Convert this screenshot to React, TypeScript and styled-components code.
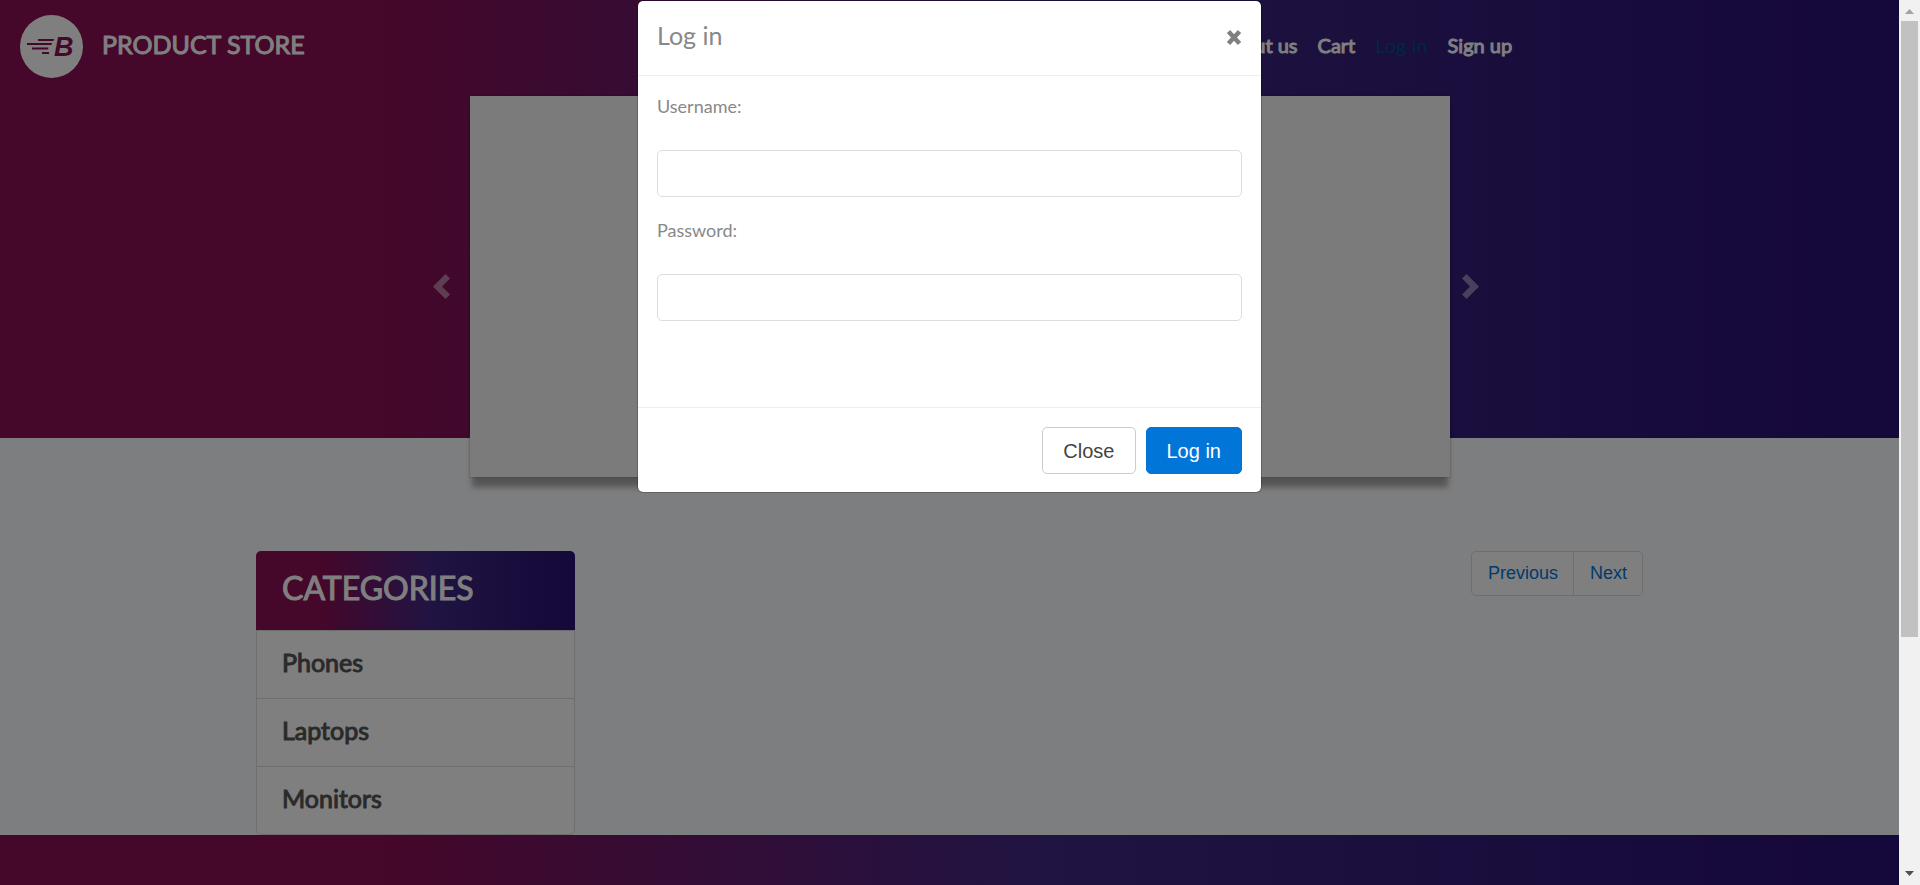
import React from 'react';
import styled, { createGlobalStyle } from 'styled-components';

const brandGradient = 'linear-gradient(to right, #8a0e54 0%, #8a0e54 20%, #402886 55%, #36207c 70%, #2a1074 100%)';
const lato = 'Lato, "Open Sans", sans-serif';
const arial = '"Liberation Sans", Arial, sans-serif';

const GlobalStyle = createGlobalStyle`
  *, *::before, *::after { box-sizing: border-box; }
  body { margin: 0; font-family: ${lato}; color: #888; background: #fbfcfe; }
  a { text-decoration: none; }
  h4, p, ul { margin: 0; padding: 0; }
`;

const Shell = styled.div`
  position: relative;
  display: flex;
  height: 100vh;
  overflow: hidden;
`;

const Page = styled.div`
  position: relative;
  flex: 1;
  min-width: 0;
  overflow: hidden;
`;

const Hero = styled.header`
  height: 438px;
  background: ${brandGradient};
`;

const NavBar = styled.nav`
  display: flex;
  align-items: center;
  height: 96px;
  padding: 0 20% 3px 20px;
`;

const Brand = styled.a`
  display: flex;
  align-items: center;
  gap: 19px;
  color: #fff;
  font-size: 25px;
  line-height: 32px;
  -webkit-text-stroke: 1px currentColor;

  span { padding-bottom: 6px; }
`;

const NavList = styled.ul`
  display: flex;
  gap: 6px;
  margin-left: auto;
  padding-bottom: 4px;
  list-style: none;
`;

const NavLink = styled.a<{ $active?: boolean }>`
  padding: 0 7px;
  font-size: 20px;
  line-height: 30px;
  white-space: nowrap;
  color: ${(p) => (p.$active ? '#014c8c' : '#fff')};
  -webkit-text-stroke: ${(p) => (p.$active ? '0' : '1px currentColor')};
`;

const Carousel = styled.section`
  display: flex;
  justify-content: center;
  align-items: center;
  gap: 12px;
  padding-left: 13px;
`;

const Slide = styled.div`
  width: 980px;
  height: 381px;
  margin-left: 8px;
  background: #f7f7f7;
  box-shadow: 0 12px 6px -2px rgba(0, 0, 0, 0.33), 0 0 2px rgba(0, 0, 0, 0.3);
`;

const Arrow = styled.button`
  display: flex;
  padding: 0;
  border: 0;
  background: none;
  color: #fff;
  opacity: 0.45;
`;

const Content = styled.main`
  display: flex;
  justify-content: space-between;
  align-items: flex-start;
  width: 75%;
  max-width: 1387px;
  margin: 0 auto;
  padding-top: 113px;
`;

const Categories = styled.div`
  display: flex;
  flex-direction: column;
  width: 23%;
`;

const CategoryTitle = styled.a`
  padding: 17px 26px 22px;
  border-radius: 5px 5px 0 0;
  background: ${brandGradient};
  color: #fff;
  font-size: 32px;
  line-height: 40px;
  -webkit-text-stroke: 1px currentColor;
`;

const Category = styled.a`
  padding: 15px 25px 20px;
  border: 1px solid #ddd;
  border-bottom-width: 0;
  background: #fff;
  color: #555;
  font-size: 25px;
  line-height: 32px;
  -webkit-text-stroke: 1px currentColor;

  &:last-child {
    border-bottom-width: 1px;
    border-radius: 0 0 5px 5px;
  }
`;

const Pager = styled.div`
  display: flex;
`;

const PageButton = styled.button`
  height: 45px;
  padding: 0 15px 2px 16px;
  border: 1px solid #ddd;
  background: #fff;
  color: #0275d8;
  font: 18px/24px ${arial};

  &:first-child { border-radius: 5px 0 0 5px; }
  &:last-child { border-left: 0; border-radius: 0 5px 5px 0; }
`;

const Footer = styled.footer`
  height: 50px;
  background: ${brandGradient};
`;

const Backdrop = styled.div`
  position: absolute;
  inset: 0;
  display: flex;
  justify-content: center;
  align-items: flex-start;
  background: rgba(0, 0, 0, 0.5);
`;

const Dialog = styled.form`
  width: 625px;
  border: 1px solid rgba(0, 0, 0, 0.2);
  border-radius: 6px;
  background: #fff;
  background-clip: padding-box;
`;

const DialogHeader = styled.div`
  display: flex;
  justify-content: space-between;
  align-items: flex-start;
  height: 75px;
  padding: 16px 19px;
  border-bottom: 1px solid #eceeef;

  h4 { font-size: 25px; font-weight: 400; line-height: 36px; color: #888; }
`;

const CloseIcon = styled.button`
  display: flex;
  padding: 12px 0;
  border: 0;
  background: none;
  color: #808080;
`;

const DialogBody = styled.div`
  display: flex;
  flex-direction: column;
  height: 331px;
  padding: 18px 19px;
`;

const Field = styled.div`
  display: flex;
  flex-direction: column;
  gap: 31px;
  margin-bottom: 21px;

  label { font-size: 18px; line-height: 25px; }
`;

const TextInput = styled.input`
  height: 47px;
  padding: 0 15px;
  border: 1px solid #ddd;
  border-radius: 5px;
  font: 20px/24px ${arial};
`;

const DialogFooter = styled.div`
  display: flex;
  justify-content: flex-end;
  gap: 10px;
  padding: 19px 19px 18px;
  border-top: 1px solid #eceeef;
`;

const Button = styled.button<{ $primary?: boolean }>`
  height: 47px;
  padding: 0 20px;
  border: 1px solid ${(p) => (p.$primary ? '#0275d8' : '#ccc')};
  border-radius: 5px;
  background: ${(p) => (p.$primary ? '#0275d8' : '#fff')};
  color: ${(p) => (p.$primary ? '#fff' : '#444')};
  font: 20px/28px ${arial};
`;

const ScrollTrack = styled.div`
  display: flex;
  flex-direction: column;
  align-items: center;
  width: 21px;
  padding: 9px 0;
  background: #f1f1f1;

  svg:last-child { margin-top: auto; }
`;

const ScrollThumb = styled.div`
  width: 17px;
  height: 71%;
  margin-top: 7px;
  background: #c1c1c1;
`;

const Logo = () => (
  <svg width="63" height="63" viewBox="0 0 63 63" aria-hidden="true">
    <circle cx="31.5" cy="31.5" r="31.5" fill="#fff" />
    <g fill="#8a0e54" stroke="none">
      <path d="M18 24H34L33.5 26H18zM7 28H32L31.5 30H7zM12 32.500H28.500L28 34.500H12zM22 37H29V39H22z" />
      <text x="34" y="41" fontFamily="Liberation Sans" fontSize="27" fontWeight="700" fontStyle="italic">B</text>
    </g>
  </svg>
);

const Chevron = ({ flip }: { flip?: boolean }) => (
  <svg width="17" height="25" viewBox="0 0 17 25" aria-hidden="true">
    <path
      d={flip ? 'M4.500 0L17 12.500L4.500 25L0 20.500L8 12.500L0 4.500z' : 'M12.500 0L0 12.500L12.500 25L17 20.500L9 12.500L17 4.500z'}
      fill="currentColor"
    />
  </svg>
);

export default function App() {
  return (
    <>
      <GlobalStyle />
      <Shell>
        <Page>
          <Hero>
            <NavBar>
              <Brand href="#home">
                <Logo />
                <span>PRODUCT STORE</span>
              </Brand>
              <NavList>
                <li><NavLink href="#about">About us</NavLink></li>
                <li><NavLink href="#cart">Cart</NavLink></li>
                <li><NavLink href="#login" $active>Log in</NavLink></li>
                <li><NavLink href="#signup">Sign up</NavLink></li>
              </NavList>
            </NavBar>
            <Carousel>
              <Arrow type="button" aria-label="Previous slide"><Chevron /></Arrow>
              <Slide />
              <Arrow type="button" aria-label="Next slide"><Chevron flip /></Arrow>
            </Carousel>
          </Hero>
          <Content>
            <Categories>
              <CategoryTitle href="#categories">CATEGORIES</CategoryTitle>
              <Category href="#phones">Phones</Category>
              <Category href="#laptops">Laptops</Category>
              <Category href="#monitors">Monitors</Category>
            </Categories>
            <Pager>
              <PageButton type="button">Previous</PageButton>
              <PageButton type="button">Next</PageButton>
            </Pager>
          </Content>
          <Footer />
          <Backdrop>
            <Dialog role="dialog" aria-label="Log in" onSubmit={(e) => e.preventDefault()}>
              <DialogHeader>
                <h4>Log in</h4>
                <CloseIcon type="button" aria-label="Close">
                  <svg width="16" height="17" viewBox="0 0 16 17" aria-hidden="true">
                    <path d="M2.500 2.500L13.500 14.500M13.500 2.500L2.500 14.500" stroke="currentColor" strokeWidth="4.500" />
                  </svg>
                </CloseIcon>
              </DialogHeader>
              <DialogBody>
                <Field>
                  <label htmlFor="username">Username:</label>
                  <TextInput id="username" type="text" />
                </Field>
                <Field>
                  <label htmlFor="password">Password:</label>
                  <TextInput id="password" type="password" />
                </Field>
              </DialogBody>
              <DialogFooter>
                <Button type="button">Close</Button>
                <Button type="submit" $primary>Log in</Button>
              </DialogFooter>
            </Dialog>
          </Backdrop>
        </Page>
        <ScrollTrack aria-hidden="true">
          <svg width="9" height="5" viewBox="0 0 9 5"><path d="M0 5L4.500 0L9 5z" fill="#a3a3a3" /></svg>
          <ScrollThumb />
          <svg width="9" height="5" viewBox="0 0 9 5"><path d="M0 0L4.500 5L9 0z" fill="#505050" /></svg>
        </ScrollTrack>
      </Shell>
    </>
  );
}
